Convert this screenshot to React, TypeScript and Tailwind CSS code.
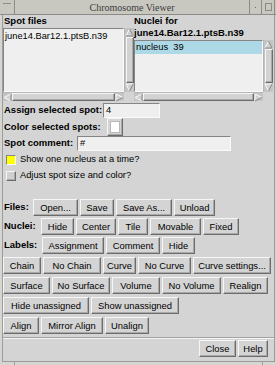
import React from 'react';

const raised =
  'border border-t-[#f6f6f6] border-l-[#f6f6f6] border-r-[#6c6c6c] border-b-[#6c6c6c] shadow-[inset_-1px_-1px_0_#a9a9a9]';
const sunken =
  'border border-t-[#858585] border-l-[#858585] border-r-[#fafafa] border-b-[#fafafa]';

function Btn({ w, children }: { w: string; children: React.ReactNode }) {
  return (
    <button
      className={`${w} h-[17px] shrink-0 flex items-center justify-center bg-[#d4d4d4] ${raised} text-[9.4px] leading-none text-black whitespace-nowrap`}
    >
      {children}
    </button>
  );
}

function Arrow({ dir }: { dir: 'up' | 'down' | 'left' | 'right' }) {
  const light = '#fbfbfb';
  const dark = '#8a8a8a';
  return (
    <svg width="9" height="9" viewBox="0 0 9 9" className="shrink-0">
      {dir === 'up' && (
        <>
          <polygon points="1,8 4.5,1 8,8" fill="#d0d0d0" />
          <polyline points="1,8 4.5,1" stroke={light} fill="none" />
          <polyline points="4.5,1 8,8 1,8" stroke={dark} fill="none" />
        </>
      )}
      {dir === 'down' && (
        <>
          <polygon points="1,1 8,1 4.5,8" fill="#d0d0d0" />
          <polyline points="4.5,8 1,1 8,1" stroke={light} fill="none" />
          <polyline points="8,1 4.5,8" stroke={dark} fill="none" />
        </>
      )}
      {dir === 'left' && (
        <>
          <polygon points="1,4.5 8,1 8,8" fill="#d0d0d0" />
          <polyline points="8,8 1,4.5 8,1" stroke={light} fill="none" />
          <polyline points="8,1 8,8" stroke={dark} fill="none" />
        </>
      )}
      {dir === 'right' && (
        <>
          <polygon points="1,1 8,4.5 1,8" fill="#d0d0d0" />
          <polyline points="1,8 1,1 8,4.5" stroke={light} fill="none" />
          <polyline points="8,4.5 1,8" stroke={dark} fill="none" />
        </>
      )}
    </svg>
  );
}

function VScroll() {
  return (
    <div className="w-[10px] h-full flex flex-col items-center bg-[#c4c4c4] border-l border-[#b4b4b4]">
      <Arrow dir="up" />
      <div className={`w-[8px] flex-1 bg-[#d2d2d2] ${raised}`} />
      <Arrow dir="down" />
    </div>
  );
}

function HScroll({ w }: { w: string }) {
  return (
    <div className={`${w} h-[9px] flex items-center bg-[#c4c4c4] border-t border-[#b4b4b4]`}>
      <Arrow dir="left" />
      <div className={`h-[8px] flex-1 bg-[#d2d2d2] ${raised}`} />
      <Arrow dir="right" />
    </div>
  );
}

export default function App() {
  return (
    <div className="w-[276px] h-[365px] flex flex-col bg-[#d6d6d0] pl-[2px] pr-[1px] font-['Liberation_Sans',Arial,sans-serif] text-black overflow-hidden">
      {/* Title bar */}
      <div className="-ml-[2px] -mr-[1px] h-[15px] shrink-0 flex bg-[#c8c8c0] border-b border-[#8c8c86]">
        <div className="w-[15px] border-r border-[#8c8c86] flex justify-center pt-[3px]">
          <div className="w-[8px] h-[1px] bg-[#8c8c86]" />
        </div>
        <div className="flex-1 flex items-center justify-center font-['Liberation_Serif',serif] text-[10px] text-[#3c3c3c]">
          Chromosome Viewer
        </div>
        <div className="w-[12px] border-l border-[#8c8c86] flex items-center justify-center">
          <div className="w-[1px] h-[1px] bg-[#6a6a6a]" />
        </div>
        <div className="w-[13px] border-l border-[#8c8c86] flex justify-center pt-[3px]">
          <div className="w-[7px] h-[8px] border border-[#8c8c86]" />
        </div>
        <div className="w-[2px] border-l border-[#8c8c86]" />
      </div>

      {/* Window body */}
      <div className="h-[347px] shrink-0 flex flex-col bg-[#d4d4d4] border-l border-r border-b border-[#9c9c9c]">
        {/* Lists */}
        <div className="h-[86px] flex">
          <div className="w-[131px] flex flex-col">
            <div className="h-[13px] text-[9.5px] font-bold leading-[12px] pl-[1px]">Spot files</div>
            <div className="flex-1 flex">
              <div className={`w-[121px] bg-[#efefef] ${sunken} text-[9.3px] leading-[12px] pl-[1px] pt-[1px] whitespace-nowrap`}>
                june14.Bar12.1.ptsB.n39
              </div>
              <VScroll />
            </div>
            <HScroll w="w-[121px]" />
          </div>
          <div className="w-[140px] flex flex-col">
            <div className="h-[25px] text-[9.5px] font-bold leading-[12px] whitespace-nowrap">
              <div>Nuclei for</div>
              <div>june14.Bar12.1.ptsB.n39</div>
            </div>
            <div className="flex-1 flex">
              <div className={`w-[129px] bg-[#efefef] ${sunken}`}>
                <div className="h-[13px] bg-[#add8e6] text-[9.3px] leading-[13px] pl-[1px] whitespace-pre">
                  nucleus  39
                </div>
              </div>
              <VScroll />
            </div>
            <HScroll w="w-[129px]" />
          </div>
        </div>

        {/* Form */}
        <div className="flex flex-col text-[9.5px]">
          <div className="mt-[2px] h-[15px] flex items-center">
            <div className="w-[100px] pl-[1px] font-bold whitespace-nowrap">Assign selected spot:</div>
            <div className={`w-[57px] h-[15px] bg-[#efefef] ${sunken} pl-[2px] text-[9.3px] leading-[13px]`}>4</div>
          </div>
          <div className="h-[18px] flex items-center">
            <div className="w-[104px] pl-[1px] font-bold whitespace-nowrap">Color selected spots:</div>
            <div className={`w-[16px] h-[18px] bg-[#d4d4d4] ${raised} flex items-center justify-center`}>
              <div className="w-[10px] h-[12px] bg-white border border-[#b8b8b8]" />
            </div>
          </div>
          <div className="h-[15px] flex items-center">
            <div className="w-[74px] pl-[1px] font-bold whitespace-nowrap">Spot comment:</div>
            <div className={`w-[154px] h-[15px] bg-[#efefef] ${sunken} pl-[2px] text-[9.3px] leading-[13px]`}>#</div>
          </div>
          <div className="mt-[2px] h-[13px] flex items-center">
            <div className={`ml-[3px] w-[10px] h-[10px] bg-[#ffff00] ${sunken}`} />
            <div className="ml-[4px] text-[9.3px] whitespace-nowrap">Show one nucleus at a time?</div>
          </div>
          <div className="mt-[3px] h-[13px] flex items-center">
            <div className={`ml-[3px] w-[10px] h-[10px] bg-[#d0d0d0] ${raised}`} />
            <div className="ml-[4px] text-[9.3px] whitespace-nowrap">Adjust spot size and color?</div>
          </div>
        </div>

        {/* Button rows */}
        <div className="mt-[17px] flex flex-col">
          <div className="h-[19px] flex gap-[2px]">
            <div className="w-[28px] h-[17px] flex items-center pl-[1px] text-[9.5px] font-bold">Files:</div>
            <Btn w="w-[45px]">Open...</Btn>
            <Btn w="w-[34px]">Save</Btn>
            <Btn w="w-[56px]">Save As...</Btn>
            <Btn w="w-[41px]">Unload</Btn>
          </div>
          <div className="h-[19px] flex gap-[2px]">
            <div className="w-[36px] h-[17px] flex items-center pl-[1px] text-[9.5px] font-bold">Nuclei:</div>
            <Btn w="w-[33px]">Hide</Btn>
            <Btn w="w-[40px]">Center</Btn>
            <Btn w="w-[30px]">Tile</Btn>
            <Btn w="w-[51px]">Movable</Btn>
            <Btn w="w-[36px]">Fixed</Btn>
          </div>
          <div className="h-[20px] flex gap-[2px]">
            <div className="w-[37px] h-[17px] flex items-center pl-[1px] text-[9.5px] font-bold">Labels:</div>
            <Btn w="w-[62px]">Assignment</Btn>
            <Btn w="w-[54px]">Comment</Btn>
            <Btn w="w-[33px]">Hide</Btn>
          </div>
          <div className="h-[20px] flex gap-[2px]">
            <Btn w="w-[38px]">Chain</Btn>
            <Btn w="w-[58px]">No Chain</Btn>
            <Btn w="w-[33px]">Curve</Btn>
            <Btn w="w-[53px]">No Curve</Btn>
            <Btn w="w-[78px]">Curve settings...</Btn>
          </div>
          <div className="h-[20px] flex gap-[2px]">
            <Btn w="w-[47px]">Surface</Btn>
            <Btn w="w-[58px]">No Surface</Btn>
            <Btn w="w-[48px]">Volume</Btn>
            <Btn w="w-[59px]">No Volume</Btn>
            <Btn w="w-[45px]">Realign</Btn>
          </div>
          <div className="h-[20px] flex gap-[2px]">
            <Btn w="w-[86px]">Hide unassigned</Btn>
            <Btn w="w-[88px]">Show unassigned</Btn>
          </div>
          <div className="h-[20px] flex gap-[2px]">
            <Btn w="w-[36px]">Align</Btn>
            <Btn w="w-[62px]">Mirror Align</Btn>
            <Btn w="w-[44px]">Unalign</Btn>
          </div>
        </div>

        {/* Separator + dialog buttons */}
        <div className="h-[2px] border-t border-[#a2a2a2] border-b border-b-[#f4f4f4]" />
        <div className="mt-[1px] flex justify-end gap-[2px] pr-[6px]">
          <Btn w="w-[37px]">Close</Btn>
          <Btn w="w-[30px]">Help</Btn>
        </div>
      </div>

      {/* Bottom frame */}
      <div className="-ml-[2px] -mr-[1px] h-[3px] flex">
        <div className="w-[15px] border-r border-[#9c9c9c]" />
        <div className="flex-1 border-r border-[#9c9c9c]" />
        <div className="w-[13px]" />
      </div>
    </div>
  );
}
